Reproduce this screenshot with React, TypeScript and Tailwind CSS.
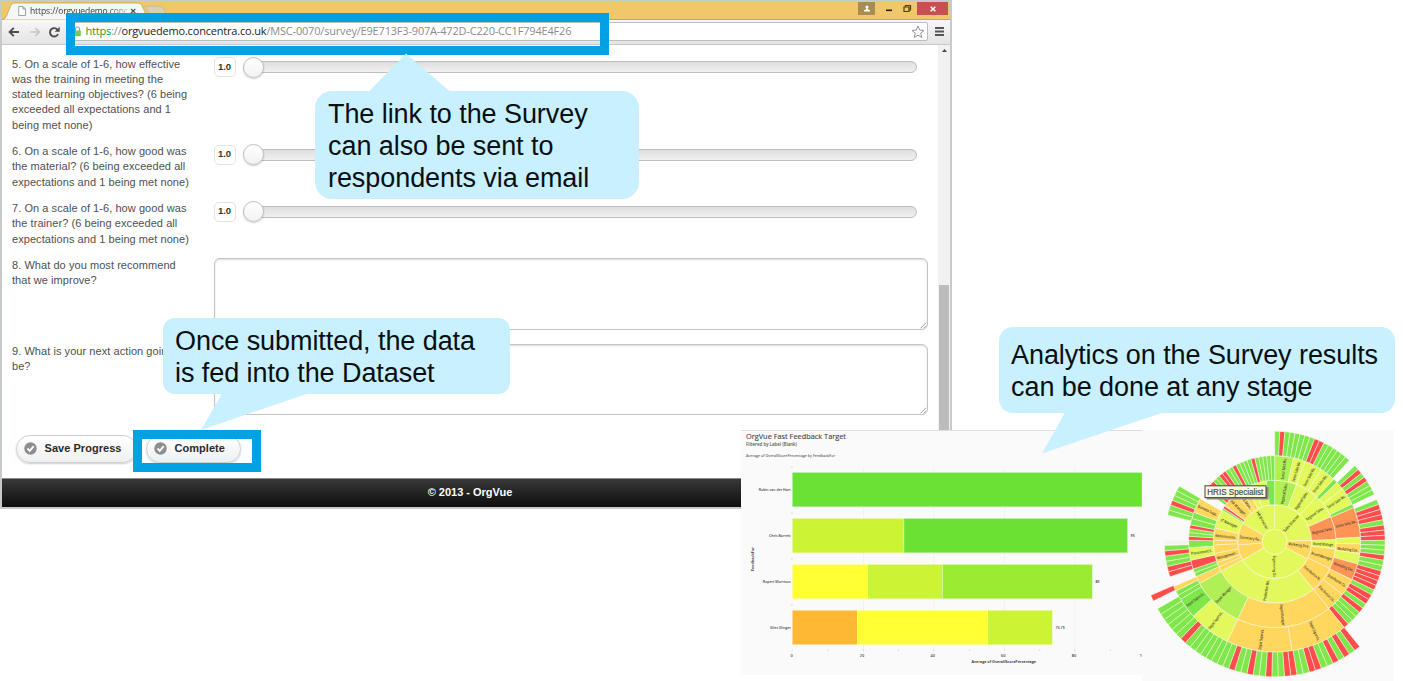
import type { ReactNode } from "react";

const YELLOW = "#e2f85c";
const GREEN = "#7fe64b";
const LIME = "#b1ef57";
const RED = "#ff4d4d";
const ORANGE = "#ffd65e";
const CORAL = "#ff9457";

type Wedge = [ring: number, start: number, end: number, color: string];
type Label = [angle: number, ring: number, text: string];

const RADII = [12.4, 37, 61.4, 86, 110.4, 135];

function run(ring: number, start: number, end: number, codes: string): Wedge[] {
  const step = (end - start) / codes.length;
  return codes
    .split("")
    .map((c, i) => [ring, start + i * step, start + (i + 1) * step, c === "R" ? RED : GREEN] as Wedge);
}

const WEDGES: Wedge[] = [
  [0, 0, 88, YELLOW],
  [0, 88, 118, ORANGE],
  [0, 118, 240.5, YELLOW],
  [0, 240.5, 265, ORANGE],
  [0, 265, 300, ORANGE],
  [0, 300, 360, YELLOW],

  [1, 0, 21, LIME],
  [1, 21, 43, YELLOW],
  [1, 43, 66, YELLOW],
  [1, 66, 88, CORAL],
  [1, 88, 97, YELLOW],
  [1, 97, 116, ORANGE],
  [1, 116, 141, ORANGE],
  [1, 141, 241, YELLOW],
  [1, 241, 245.5, ORANGE],
  [1, 245.5, 250, ORANGE],
  [1, 250, 259, ORANGE],
  [1, 259, 267, ORANGE],
  [1, 267, 271.5, ORANGE],
  [1, 271.5, 283, ORANGE],
  [1, 283, 301, YELLOW],
  [1, 301, 303, GREEN],
  [1, 303, 305.5, RED],
  [1, 306, 321, ORANGE],
  [1, 321, 327, ORANGE],
  [1, 327, 333, ORANGE],
  [1, 333, 340, YELLOW],
  [1, 340, 352, YELLOW],
  [1, 352, 360, GREEN],

  [2, 0, 12.7, LIME],
  [2, 12.7, 20.7, YELLOW],
  [2, 20.7, 33, YELLOW],
  [2, 33, 43.5, YELLOW],
  [2, 43.5, 46.5, GREEN],
  [2, 46.5, 52, YELLOW],
  [2, 52, 64, YELLOW],
  [2, 64, 66.7, GREEN],
  [2, 66.7, 87, CORAL],
  [2, 87, 91.6, YELLOW],
  [2, 91.6, 98, ORANGE],
  [2, 98, 105, YELLOW],
  [2, 105, 116.3, CORAL],
  [2, 116.3, 128, ORANGE],
  [2, 128, 141, ORANGE],
  [2, 141, 205.5, ORANGE],
  [2, 205.5, 241, LIME],
  [2, 241, 246, ORANGE],
  ...run(2, 246, 251.5, "GG"),
  [2, 251.5, 257.5, RED],
  [2, 257.5, 266, YELLOW],
  [2, 266, 271, GREEN],
  [2, 271, 273.6, RED],
  ...run(2, 273.6, 278.8, "GG"),
  [2, 278.8, 281.4, RED],
  ...run(2, 281.4, 290, "GG"),
  [2, 290, 300, ORANGE],
  ...run(2, 306.5, 360, "GRRGGRRGGRGGGGRGGGGG"),

  ...run(3, 0, 42.5, "GRGGGGGGRRGGGGGG"),
  ...run(3, 46.5, 64.6, "GRGRGGG"),
  ...run(3, 67.5, 78.5, "GRRR"),
  [3, 78.5, 81.3, GREEN],
  ...run(3, 81.3, 89.3, "RRR"),
  ...run(3, 89.3, 97, "GGG"),
  [3, 97, 99.7, RED],
  ...run(3, 99.7, 105.4, "GG"),
  ...run(3, 105.4, 116, "RRRR"),
  ...run(3, 116, 141, "GRRGRGGGR"),
  [3, 141, 171, ORANGE],
  [3, 171, 205.5, ORANGE],
  [3, 205.5, 227.5, YELLOW],
  [3, 227.5, 238.5, GREEN],
  ...run(3, 238.5, 243.5, "GG"),
  [3, 243.5, 246, ORANGE],
  ...run(3, 251.5, 268, "RRGGRG"),
  [3, 268.3, 270.6, "#f3f3f3"],
  ...run(3, 284, 300.2, "GGRGGG"),

  ...run(4, 141, 240.2, "RGRGRGGRRGGRRGGRGGRGGRGGGGGGGGRGGGGGG"),
  [4, 244, 246.6, RED],
];

const LABELS: Label[] = [
  [42, 0, "Sales Director"],
  [98, 0, "Marketing Dire.."],
  [180, 0, "Engineering Dir"],
  [278, 0, "Secretary Re.."],
  [330, 0, "HR Director"],
  [11, 1, "Regional Sales.."],
  [33, 1, "Regional Sales.."],
  [55, 1, "Regional Sales.."],
  [77, 1, "Regional Sales.."],
  [93, 1, "Brand Manage.."],
  [107, 1, "Brand Manager"],
  [130, 1, "Distribution M.."],
  [190, 1, "Production Ma.."],
  [254, 1, "Management .."],
  [276, 1, "Administration.."],
  [292, 1, "IT Manager"],
  [313, 1, "HR Manager.."],
  [324, 1, "HRIS Man.."],
  [346, 1, "HR Sp.."],
  [7, 2, "Senior Sales Ma.."],
  [17, 2, "Senior Sales Ma.."],
  [28, 2, "Senior Sales Ma.."],
  [38, 2, "Senior Sales Ma.."],
  [57, 2, "Senior Sales Ma.."],
  [76, 2, "Senior Sales Ma.."],
  [96, 2, "Marketing Exe.."],
  [110, 2, "Marketing Exe.."],
  [122, 2, "Distribution Co.."],
  [135, 2, "Distribution Co.."],
  [174, 2, "Depot Manager"],
  [224, 2, "Depot Manager"],
  [262, 2, "Procurement S.."],
  [295, 2, "Business Supp.."],
  [156, 3, "Depot Supervis.."],
  [188, 3, "Depot Supervis.."],
  [217, 3, "Depot Supervis.."],
  [234, 3, "Depot Supervis.."],
];

const CX = 132.7;
const CY = 111.7;

function point(radius: number, angle: number) {
  const a = (angle * Math.PI) / 180;
  return `${(CX + radius * Math.sin(a)).toFixed(2)} ${(CY - radius * Math.cos(a)).toFixed(2)}`;
}

function wedgePath([ring, start, end]: Wedge) {
  const r0 = RADII[ring];
  const r1 = RADII[ring + 1];
  const large = end - start > 180 ? 1 : 0;
  return `M${point(r0, start)}L${point(r1, start)}A${r1} ${r1} 0 ${large} 1 ${point(r1, end)}L${point(r0, end)}A${r0} ${r0} 0 ${large} 0 ${point(r0, start)}Z`;
}

function Sunburst() {
  return (
    <svg width="252" height="251" viewBox="0 0 252 251" className="block overflow-visible bg-[#fafafa]">
      <g stroke="#fbfbe8" strokeOpacity="0.65" strokeWidth="0.75">
        {WEDGES.map((w, i) => (
          <path key={i} d={wedgePath(w)} fill={w[3]} />
        ))}
        <circle cx={CX} cy={CY} r="12.4" fill={YELLOW} />
      </g>
      <g fontFamily="'Open Sans', sans-serif" fontSize="4" fontWeight="600" fill="#3c3c28" textAnchor="middle">
        {LABELS.map(([angle, ring, text], i) => {
          const mid = (RADII[ring] + RADII[ring + 1]) / 2;
          const turn = angle > 180 ? angle + 90 : angle - 90;
          return (
            <text
              key={i}
              transform={`translate(${point(mid, angle)}) rotate(${turn})`}
              y="1.4"
              textLength={Math.min(21.5, text.length * 1.8)}
              lengthAdjust="spacingAndGlyphs"
            >
              {text}
            </text>
          );
        })}
      </g>
      <rect x="64.5" y="57" width="62" height="12.5" fill="#8b8b80" />
      <rect x="63" y="55.8" width="61" height="11.8" fill="#fbfbdc" stroke="#45453c" strokeWidth="1" />
      <text x="65.3" y="65" fontFamily="'Liberation Sans', sans-serif" fontSize="8.6" fill="#444" stroke="#444" strokeWidth="0.15" textLength="56" lengthAdjust="spacingAndGlyphs">
        HRIS Specialist
      </text>
    </svg>
  );
}

const BARS: { y: number; name: string; value?: string; parts: [number, number, string][] }[] = [
  { y: 42.4, name: "Robin van der Hart", parts: [[51.3, 401, "#6be233"]] },
  { y: 88.4, name: "Chris Barrett", value: "95", parts: [[51.3, 163, "#cbf434"], [163, 386.6, "#6be233"]] },
  { y: 134.4, name: "Rupert Morrison", value: "85", parts: [[51.3, 126.5, "#ffff33"], [126.5, 201.5, "#cbf434"], [201.5, 351.4, "#9ceb33"]] },
  { y: 180.3, name: "Giles Slinger", value: "73.75", parts: [[51.3, 116.5, "#ffb833"], [116.5, 246.7, "#ffff33"], [246.7, 311.4, "#cbf434"]] },
];

function BarChart() {
  return (
    <svg width="401" height="245" viewBox="0 0 401 245" className="block bg-[#fafafa]" fontFamily="'Open Sans', sans-serif" fill="#444">
      <rect width="401" height="1" fill="#dedfe0" />
      <text x="5" y="9" fontSize="7.6" fill="#444" stroke="#444" strokeWidth="0.12" textLength="100" lengthAdjust="spacingAndGlyphs">OrgVue Fast Feedback Target</text>
      <text x="5" y="15.6" fontSize="4.8" fontWeight="600" fill="#555" textLength="51" lengthAdjust="spacingAndGlyphs">Filtered by Label (Blank)</text>
      <text x="5" y="26.5" fontSize="4" fontWeight="600" fill="#666" textLength="89" lengthAdjust="spacingAndGlyphs">Average of OverallScorePercentage by FeedbackFor</text>
      {[122, 192.5, 263, 333.5].map((x) => (
        <rect key={x} x={x} y="37" width="0.6" height="186" fill="#ededed" />
      ))}
      {BARS.map((bar) => (
        <g key={bar.name}>
          {bar.parts.map(([x0, x1, color]) => (
            <rect key={x0} x={x0} y={bar.y} width={x1 - x0} height="34.4" fill={color} stroke="#ffffff" strokeOpacity="0.4" strokeWidth="0.7" />
          ))}
          <text x="49.7" y={bar.y + 18.7} fontSize="3.5" fontWeight="600" textAnchor="end">{bar.name}</text>
          {bar.value && (
            <text x={bar.parts[bar.parts.length - 1][1] + 3} y={bar.y + 18.4} fontSize="3.7" fontWeight="600">{bar.value}</text>
          )}
          <rect x="50.5" y={bar.y - 6} width="0.9" height="1.5" fill="#ccc" />
        </g>
      ))}
      {[50.8, 86.5, 122, 157, 192.5, 228, 263, 298.5, 333.5, 369].map((x) => (
        <rect key={x} x={x} y="219.5" width="0.7" height="1.2" fill="#bbb" />
      ))}
      <g fontSize="3.9" fontWeight="600" textAnchor="middle">
        <text x="50.5" y="226.5">0</text>
        <text x="121" y="226.5">20</text>
        <text x="191.8" y="226.5">40</text>
        <text x="262.3" y="226.5">60</text>
        <text x="333" y="226.5">80</text>
        <text x="399.8" y="226.5">1</text>
      </g>
      <text x="230.5" y="233.3" fontSize="4" fontWeight="700" textLength="64.5" lengthAdjust="spacingAndGlyphs">Average of OverallScorePercentage</text>
      <text transform="translate(13.2 141) rotate(-90)" fontSize="4" fontWeight="700" textLength="24" lengthAdjust="spacingAndGlyphs">FeedbackFor</text>
    </svg>
  );
}

function TitleBar() {
  return (
    <div className="flex h-[18px] shrink-0 items-start justify-between border-b border-[#d0a650] bg-[#f0c76b]">
      <div className="relative h-[18px] w-[166px]">
        <svg width="168" height="18" viewBox="0 0 168 18" className="block">
          <path d="M143 4.3H158Q161 4.3 162 7L164.500 12H147.500Z" fill="#dccfae" stroke="#c9b280" strokeWidth="0.7" />
          <path d="M0 18Q3.500 17 5 13L8.500 4Q9.800 1 12 1H136Q139 1 140.300 4L144.500 14Q146 17 149 18Z" fill="#f6f6f6" stroke="#bb9a55" strokeWidth="0.7" />
          <path d="M16.700 4.500H21L23.500 7V13.500H16.700Z M21 4.500V7H23.500" fill="#fff" stroke="#8c8c8c" strokeWidth="0.8" />
          <path d="M129 7L133.300 11M133.300 7L129 11" stroke="#555" strokeWidth="1.200" />
        </svg>
        <div className="absolute left-[28px] top-[2px] w-[98px] whitespace-nowrap bg-linear-to-r from-[#333] from-80% to-[#33333330] bg-clip-text font-['Open_Sans',sans-serif] text-[8.5px] leading-[14px] tracking-[-0.1px] text-transparent">
          https://orgvuedemo.conc
        </div>
      </div>
      <div className="mr-[2px] flex h-[13px] items-stretch">
        <div className="flex w-[17px] items-center justify-center bg-[#a98d4e]">
          <svg width="8" height="8" viewBox="0 0 8 8" fill="#fff">
            <circle cx="4" cy="2" r="1.500" />
            <path d="M3.300 3H4.700V4.300L7 5.200V6.500H1V5.200L3.300 4.300Z" />
          </svg>
        </div>
        <svg width="42" height="13" viewBox="0 0 42 13">
          <rect x="11" y="7.500" width="6" height="1.600" fill="#222" />
          <path d="M29 5H34V9.500H29Z M30.500 5V3.500H35.500V8H34" fill="none" stroke="#4d4020" strokeWidth="1.200" />
        </svg>
        <div className="flex w-[31px] items-center justify-center bg-[#c75050]">
          <svg width="6" height="6" viewBox="0 0 6 6">
            <path d="M0.700 0.700L5.300 5.300M5.300 0.700L0.700 5.300" stroke="#fff" strokeWidth="1.500" />
          </svg>
        </div>
      </div>
    </div>
  );
}

function Toolbar() {
  return (
    <div className="flex h-[25px] shrink-0 items-center border-b border-[#c9c9c9] bg-linear-to-b from-[#f7f7f7] to-[#e4e4e4] pr-[6px] pb-px pl-[6px]">
      <svg width="54" height="14" viewBox="0 0 54 14" fill="none" className="shrink-0">
        <path d="M11 7H2M5.800 2.800L1.600 7L5.800 11.200" stroke="#4d4d4d" strokeWidth="1.900" />
        <path d="M22 7H31M27.200 3L31.200 7L27.200 11" stroke="#c4c4c4" strokeWidth="1.700" />
        <path d="M50 9.100A4.200 4.200 0 1 1 49.700 5" stroke="#4d4d4d" strokeWidth="1.900" />
        <path d="M51.700 1.800V6.800H46.700Z" fill="#4d4d4d" />
      </svg>
      <div className="ml-[6px] flex h-[19px] flex-1 items-center rounded-[2px] border border-[#bdbdbd] bg-white pl-[5px]">
        <svg width="7" height="11" viewBox="0 0 7 11" className="shrink-0">
          <path d="M1.500 5V3A2 2 0 0 1 5.500 3V5" fill="none" stroke="#9c9c9c" strokeWidth="1.100" />
          <rect x="0.200" y="4.500" width="6.600" height="5.800" rx="0.600" fill="#7cc65f" />
        </svg>
        <span className="mb-px ml-[4.500px] flex-1 whitespace-nowrap font-['Open_Sans',sans-serif] text-[11px] leading-[16px] tracking-[-0.185px] text-[#8c8c8c]">
          <span className="text-[#219c28]">https</span>://<span className="text-[#222]">orgvuedemo.concentra.co.uk</span>/MSC-0070/survey/E9E713F3-907A-472D-C220-CC1F794E4F26
        </span>
        <svg width="14" height="14" viewBox="0 0 14 14" className="mr-[2px] shrink-0">
          <path d="M7 1L8.700 5.100L13 5.400L9.700 8.200L10.800 12.500L7 10.200L3.200 12.500L4.300 8.200L1 5.400L5.300 5.100Z" fill="#fff" stroke="#949494" strokeWidth="1" />
        </svg>
      </div>
      <svg width="9" height="9" viewBox="0 0 9 9" fill="#555" className="ml-[7px] shrink-0">
        <rect width="9" height="2" />
        <rect y="3.500" width="9" height="2" />
        <rect y="7" width="9" height="2" />
      </svg>
    </div>
  );
}

function Row({ lines, className, children }: { lines: string[]; className: string; children: ReactNode }) {
  return (
    <div className={`flex shrink-0 ${className}`}>
      <div className="w-[201.5px] shrink-0 whitespace-nowrap text-[11px] leading-[15.25px] tracking-[0.06px] text-[#4f4f4f]">
        {lines.map((line) => (
          <div key={line}>{line}</div>
        ))}
      </div>
      {children}
    </div>
  );
}

function Slider() {
  return (
    <div className="-mt-[0.5px] flex h-[21px] flex-1 items-center pt-px">
      <div className="flex h-[20px] w-[22px] items-center justify-center rounded-[5px] border border-[#e3e3e3] bg-white text-[9.5px] font-bold text-[#333]">1.0</div>
      <div className="ml-[16px] flex h-[12px] w-[665.5px] items-center rounded-full border border-[#bdbdbd] bg-linear-to-b from-[#dedede] to-[#f1f1f1]">
        <div className="-ml-[10px] size-[21px] shrink-0 rounded-full border border-[#bfbfbf] bg-linear-to-b from-white to-[#f2f2f2] shadow-[0_1px_2px_#0003]" />
      </div>
    </div>
  );
}

function TextBox() {
  return (
    <div className="flex h-[71.5px] w-[714.5px] items-end justify-end rounded-[6px] border-[1.5px] border-[#c4c4c4] bg-white shadow-[inset_0_1px_2px_#0002]">
      <svg width="7" height="7" viewBox="0 0 7 7" stroke="#888" strokeWidth="0.800">
        <path d="M0.500 6.300L6 0.800M3.500 6.300L6 3.800" />
      </svg>
    </div>
  );
}

function PillButton({ label, className }: { label: string; className: string }) {
  return (
    <div className={`flex h-[28px] items-center rounded-full border border-[#d0d0d0] bg-linear-to-b from-white to-[#f0f0f0] pl-[7px] shadow-[0_1px_2px_#0003] ${className}`}>
      <svg width="13" height="13" viewBox="0 0 13 13" className="shrink-0">
        <circle cx="6.500" cy="6.500" r="6.200" fill="#8e8e8e" />
        <path d="M3.500 6.500L5.800 8.800L9.700 4.200" fill="none" stroke="#fff" strokeWidth="1.900" />
      </svg>
      <span className="ml-[8px] whitespace-nowrap text-[11px] font-bold tracking-[0.04px] text-[#2a2a2a]">{label}</span>
    </div>
  );
}

function BrowserWindow() {
  return (
    <div className="flex h-[509px] w-[952px] flex-col border-2 border-[#c6cac9] bg-white">
      <TitleBar />
      <Toolbar />
      <div className="flex min-h-0 flex-1">
        <div className="flex min-w-0 flex-1 flex-col pl-[10px] pt-[11.5px]">
          <Row
            className="h-[87.500px]"
            lines={["5. On a scale of 1-6, how effective", "was the training in meeting the", "stated learning objectives? (6 being", "exceeded all expectations and 1", "being met none)"]}
          >
            <Slider />
          </Row>
          <Row className="h-[57px]" lines={["6. On a scale of 1-6, how good was", "the material? (6 being exceeded all", "expectations and 1 being met none)"]}>
            <Slider />
          </Row>
          <Row className="h-[57px]" lines={["7. On a scale of 1-6, how good was", "the trainer? (6 being exceeded all", "expectations and 1 being met none)"]}>
            <Slider />
          </Row>
          <Row className="h-[85.500px]" lines={["8. What do you most recommend", "that we improve?"]}>
            <TextBox />
          </Row>
          <Row className="h-[91px]" lines={["9. What is your next action going to", "be?"]}>
            <TextBox />
          </Row>
          <div className="ml-[3.500px] flex gap-[9px]">
            <PillButton label="Save Progress" className="w-[121px]" />
            <PillButton label="Complete" className="w-[95px]" />
          </div>
        </div>
        <div className="flex w-[12px] shrink-0 flex-col items-center bg-[#f1f1f1] pt-[4px]">
          <svg width="5" height="3" viewBox="0 0 5 3">
            <path d="M0 3L2.500 0L5 3Z" fill="#444" />
          </svg>
          <div className="mt-[233px] w-[10px] flex-1 bg-[#bcbcbc]" />
        </div>
      </div>
      <div className="flex h-[29px] shrink-0 items-center justify-center border-t border-[#8a8a8a] bg-linear-to-b from-[#393939] to-[#0e0e0e] pr-[12px] pb-[2px] text-[11px] font-bold text-white">
        © 2013 - OrgVue
      </div>
    </div>
  );
}

function Callout({ lines, className, tail }: { lines: string[]; className: string; tail: string }) {
  return (
    <div className={`absolute bg-[#c8f0ff] whitespace-nowrap text-[27px] leading-[32.300px] tracking-[-0.070px] text-[#0a0f12] ${className}`}>
      <svg className="absolute left-0 top-0 overflow-visible" width="1" height="1">
        <path d={tail} fill="#c8f0ff" />
      </svg>
      {lines.map((line) => (
        <div key={line}>{line}</div>
      ))}
    </div>
  );
}

export default function App() {
  return (
    <div className="relative h-[681px] w-[1403px] overflow-hidden bg-white font-['Liberation_Sans',Arial,sans-serif]">
      <BrowserWindow />
      <div className="absolute left-[741px] top-[430px] flex items-start">
        <BarChart />
        <Sunburst />
      </div>
      <div className="absolute left-[66px] top-[13px] h-[42px] w-[543px] border-[9px] border-[#00a2e3]" />
      <div className="absolute left-[133px] top-[430px] h-[42px] w-[128px] border-[9px] border-[#00a2e3]" />
      <Callout
        className="left-[315px] top-[91px] h-[108px] w-[324px] rounded-[17px] pl-[13px] pt-[6.5px]"
        tail="M54 0.500L91 -37.500L135 0.500Z"
        lines={["The link to the Survey", "can also be sent to", "respondents via email"]}
      />
      <Callout
        className="left-[163px] top-[318px] h-[76px] w-[347px] rounded-[12px] pl-[12px] pt-[6.5px]"
        tail="M59 75.500L38 112L145 75.500Z"
        lines={["Once submitted, the data", "is fed into the Dataset"]}
      />
      <Callout
        className="left-[999px] top-[327px] h-[86px] w-[396px] rounded-[14px] pl-[12px] pt-[11.5px]"
        tail="M66 85.500L43 126.500L164 85.500Z"
        lines={["Analytics on the Survey results", "can be done at any stage"]}
      />
    </div>
  );
}
